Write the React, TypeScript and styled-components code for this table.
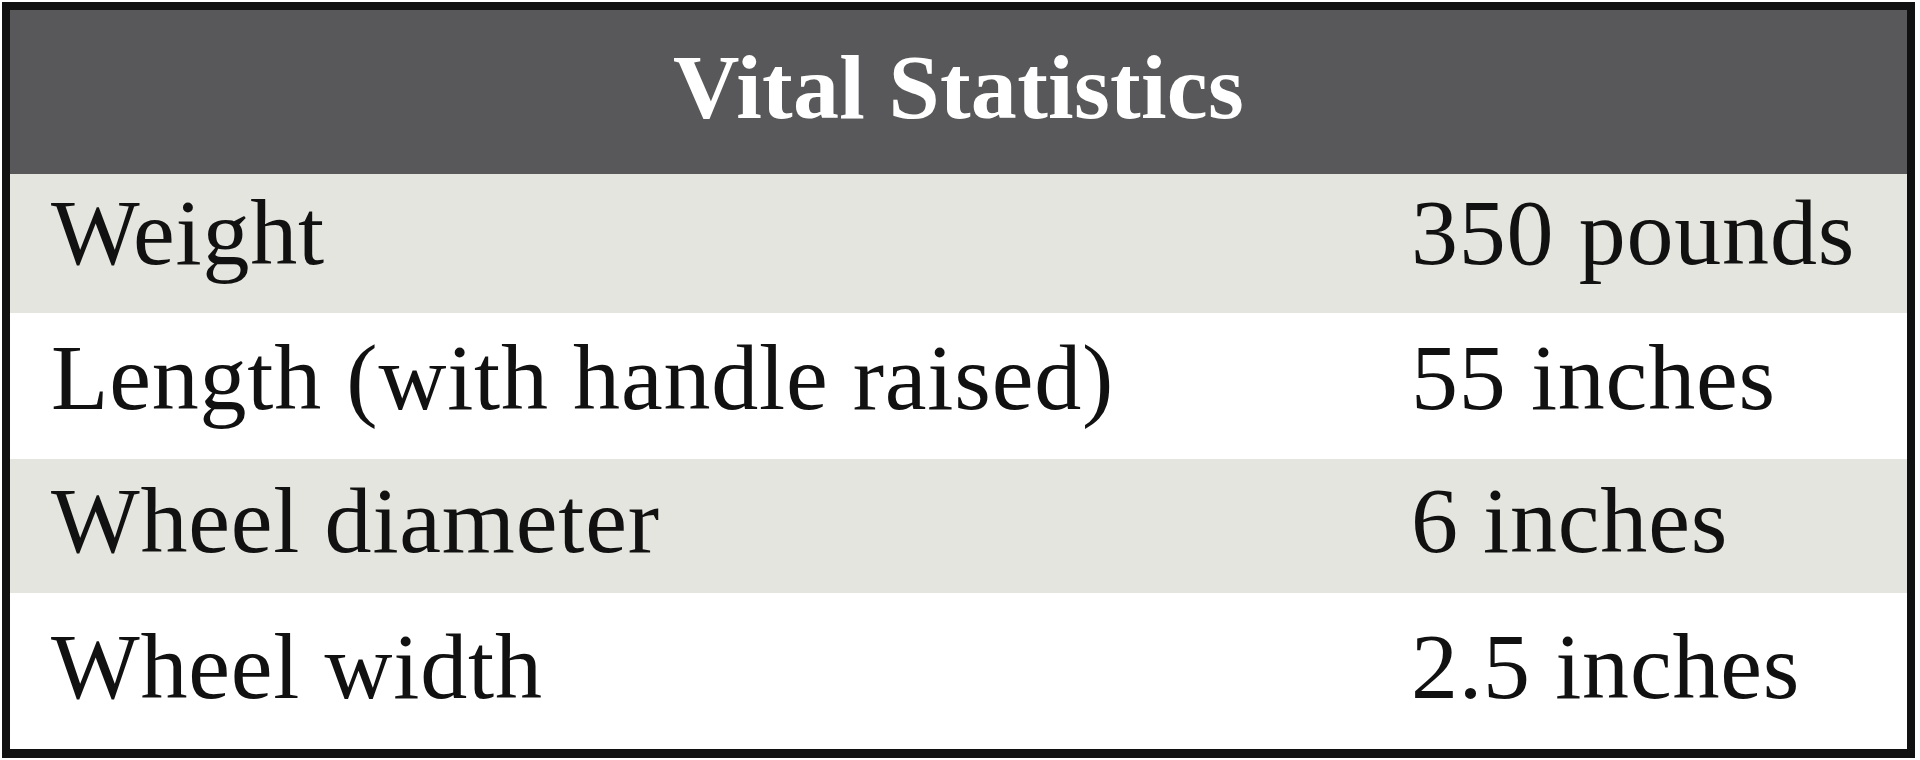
import React from 'react';
import styled, { createGlobalStyle } from 'styled-components';

const GlobalStyle = createGlobalStyle`
  html, body {
    margin: 0;
    padding: 0;
    background: #ffffff;
  }
  body {
    font-family: 'Liberation Serif', 'Times New Roman', serif;
  }
`;

const Page = styled.div`
  padding: 2px;
`;

const Table = styled.div`
  width: 1913px;
  box-sizing: border-box;
  border: 8px solid #111111;
  border-bottom-width: 9px;
  background: #ffffff;
`;

const Header = styled.div`
  height: 164px;
  box-sizing: border-box;
  padding-top: 31px;
  background: #58585a;
  color: #ffffff;
  font-size: 92px;
  line-height: 1;
  font-weight: 700;
  letter-spacing: 0.3px;
  text-align: center;
`;

const Row = styled.div<{ $striped: boolean; $height: number; $top: number }>`
  display: grid;
  grid-template-columns: 1360px 1fr;
  height: ${(p) => p.$height}px;
  box-sizing: border-box;
  padding-top: ${(p) => p.$top}px;
  background: ${(p) => (p.$striped ? '#e5e5df' : '#ffffff')};
`;

const Cell = styled.div`
  padding-left: 41px;
  color: #111111;
  font-size: 94px;
  line-height: 1;
  letter-spacing: 0.8px;
  white-space: nowrap;
`;

const stats = [
  { label: 'Weight', value: '350 pounds', height: 139, top: 11 },
  { label: 'Length (with handle raised)', value: '55 inches', height: 146, top: 17 },
  { label: 'Wheel diameter', value: '6 inches', height: 134, top: 14 },
  { label: 'Wheel width', value: '2.5 inches', height: 156, top: 26 },
];

const App: React.FC = () => {
  return (
    <Page>
      <GlobalStyle />
      <Table>
        <Header>Vital Statistics</Header>
        {stats.map((row, i) => (
          <Row key={row.label} $striped={i % 2 === 0} $height={row.height} $top={row.top}>
            <Cell>{row.label}</Cell>
            <Cell>{row.value}</Cell>
          </Row>
        ))}
      </Table>
    </Page>
  );
};

export default App;
